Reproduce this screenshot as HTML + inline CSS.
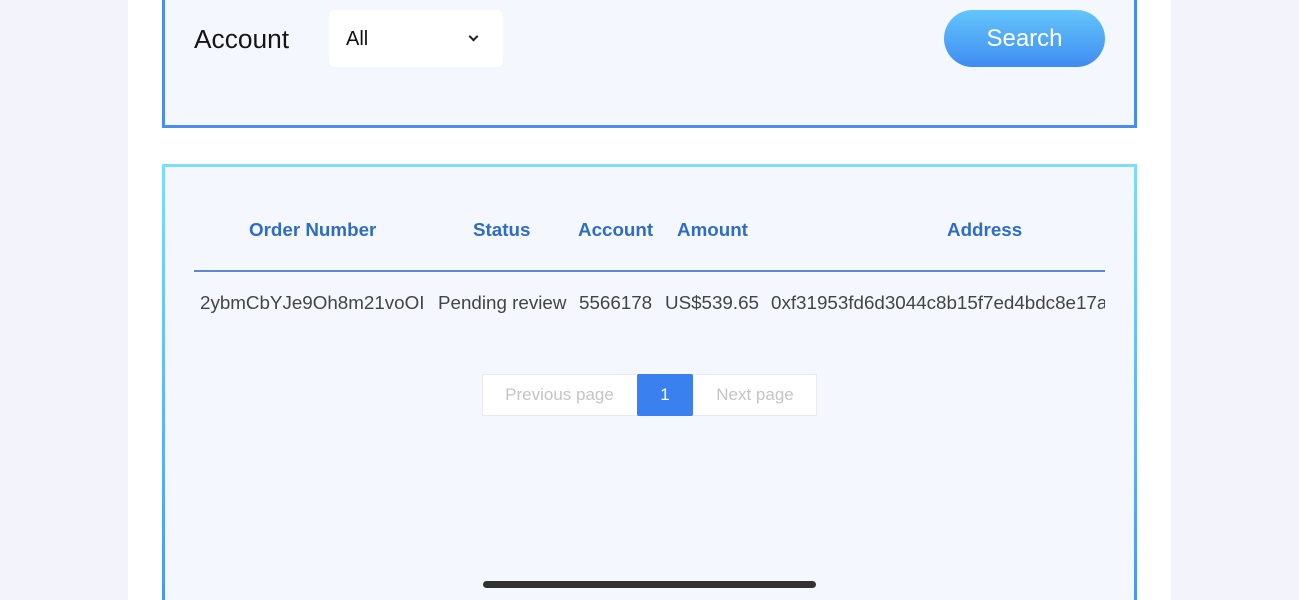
<!DOCTYPE html>
<html><head><meta charset="utf-8"><style>
*{margin:0;padding:0;box-sizing:border-box}
html{width:1299px;height:600px;overflow:hidden}
body{width:1299px;height:600px;background:#f2f3fb;position:relative;overflow:hidden;font-family:"Liberation Sans",Arial,sans-serif}
.mid{position:absolute;left:128px;top:0;width:1043px;height:600px;background:#fff}
.box1{position:absolute;left:162px;top:-10px;width:975px;height:138px;background:#f4f7fe;border:3px solid #4a8cf0}
.box2{position:absolute;left:162px;top:164px;width:975px;height:436px;border:3px solid transparent;border-bottom:none;background:linear-gradient(#f4f7fe,#f4f7fe) padding-box,linear-gradient(#7fdcfb,#4a97f2) border-box}
.t{position:absolute;white-space:nowrap}
.acc{left:194px;top:24px;font-size:26.3px;color:#151515}
.sel{position:absolute;left:329px;top:10px;width:174px;height:57px;background:#fff;border-radius:6px}
.all{left:346px;top:28px;font-size:20px;color:#111}
.chev{position:absolute;left:470px;top:33px;width:7px;height:7px;border-right:2.5px solid #222;border-bottom:2.5px solid #222;transform:rotate(45deg)}
.btn{position:absolute;left:944px;top:10px;width:161px;height:57px;border-radius:29px;background:linear-gradient(#64c6fb,#3f8cf1);color:#fff;font-size:24px;text-align:center;line-height:58px}
.h{top:219px;font-size:18.8px;font-weight:bold;color:#2f6dc2}
.line{position:absolute;left:194px;top:270px;width:911px;height:2px;background:#5b8ad0}
.r{top:292px;font-size:18.8px;color:#444}
.pg{position:absolute;top:374px;height:42px;line-height:42px;text-align:center;font-size:17px}
.bar{position:absolute;left:483px;top:581px;width:333px;height:7px;border-radius:4px;background:#333}
</style></head><body>
<div class="mid"></div>
<div class="box1"></div>
<div class="t acc">Account</div>
<div class="sel"></div>
<div class="t all">All</div>
<div class="chev"></div>
<div class="btn">Search</div>
<div class="box2"></div>
<div class="t h" style="left:249px">Order Number</div>
<div class="t h" style="left:473px">Status</div>
<div class="t h" style="left:578px">Account</div>
<div class="t h" style="left:677px">Amount</div>
<div class="t h" style="left:947px">Address</div>
<div class="line"></div>
<div class="t r" style="left:200px">2ybmCbYJe9Oh8m21voOI</div>
<div class="t r" style="left:438px">Pending review</div>
<div class="t r" style="left:579px">5566178</div>
<div class="t r" style="left:665px">US$539.65</div>
<div class="t r" style="left:771px;width:334px;overflow:hidden">0xf31953fd6d3044c8b15f7ed4bdc8e17a</div>
<div class="pg" style="left:482px;width:335px;background:#fff;border:1px solid #e8e8ee"></div>
<div class="pg" style="left:482px;width:155px;color:#c4c4c8">Previous page</div>
<div class="pg" style="left:637px;width:56px;background:#3a80ee;color:#fff;border-radius:2px">1</div>
<div class="pg" style="left:693px;width:124px;color:#c4c4c8">Next page</div>
<div class="bar"></div>
</body></html>
